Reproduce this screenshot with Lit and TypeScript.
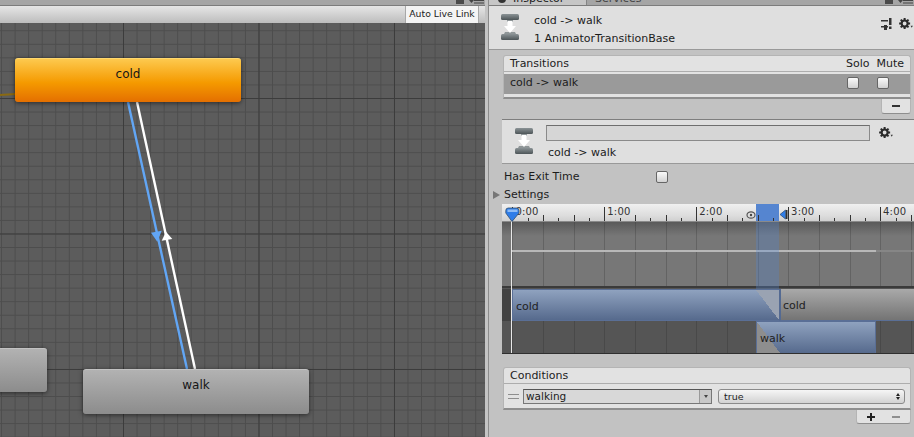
import { LitElement, html, css, svg } from "lit";
import { customElement } from "lit/decorators.js";

const range = (n: number) => Array.from({ length: n }, (_, i) => i);

const gear = () => html`
	<svg class="gear" width="14" height="11" viewBox="-6 -6 15 12" aria-hidden="true">
		${range(8).map(
			(i) => svg`<rect x="-1.100" y="-6" width="2.200" height="3" fill="#2b2b2b" transform="rotate(${i * 45})" />`
		)}
		<circle r="3.300" fill="none" stroke="#2b2b2b" stroke-width="2.400" />
		<path d="M6.500 2.500h2.500L7.750 4.500z" fill="#333" />
	</svg>
`;

const transitionIcon = () => html`
	<svg class="ticon" width="18" height="26" viewBox="0 0 18 26" aria-hidden="true">
		<defs>
			<linearGradient id="bar" x1="0" y1="0" x2="0" y2="1">
				<stop offset="0" stop-color="#8b9396" />
				<stop offset="1" stop-color="#4d5558" />
			</linearGradient>
		</defs>
		<rect x="0" y="0" width="18" height="6" rx="1.500" fill="url(#bar)" />
		<rect x="0" y="20" width="18" height="6" rx="1.500" fill="url(#bar)" />
		<path fill="#8f9698" d="M6 6h6v2H6zM4 18h10l1 2H3z" />
		<path fill="#fff" d="M6.500 7h5v5H15l-6 7-6-7h3.500z" />
	</svg>
`;

const stripIcons = () => html`
	<div class="strip-icons">
		<div class="strip-square"></div>
		<svg width="15" height="5" viewBox="0 0 15 5" aria-hidden="true">
			<path fill="#444" d="M0 0h5L2.500 3zM5 0h10v1H5zM5 2.500h10v1H5z" />
		</svg>
	</div>
`;

@customElement("app-root")
export class AppRoot extends LitElement {
	static styles = css`
		:host {
			display: block;
			width: 914px;
			height: 437px;
			overflow: hidden;
			font-family: "DejaVu Sans", sans-serif;
			font-size: 11px;
			color: #1c1c1c;
			background: #a5a5a5;
		}
		* {
			box-sizing: border-box;
		}
		svg {
			flex: none;
		}
		.root {
			display: flex;
			height: 437px;
		}
		.left {
			width: 485px;
			display: flex;
			flex-direction: column;
		}
		.divider {
			width: 4px;
			background: linear-gradient(90deg, #c4c4c4 0 3px, #8c8c8c 3px);
		}
		.right {
			flex: 1;
			min-width: 0;
			display: flex;
			flex-direction: column;
			background: #c2c2c2;
		}
		.tabstrip {
			height: 6px;
			flex: none;
			background: #a5a5a5;
			border-bottom: 1px solid #7c7c7c;
			display: flex;
			align-items: flex-end;
			overflow: hidden;
			position: relative;
		}
		.tab {
			flex: none;
			height: 18px;
			padding: 5px 0 0 24px;
			line-height: 14px;
			white-space: nowrap;
			overflow: hidden;
			position: relative;
		}
		.tab.on {
			width: 98px;
			background: #c6c6c6;
			border-right: 1px solid #858585;
		}
		.tab.on::before {
			content: "";
			position: absolute;
			left: 9px;
			top: 8px;
			width: 8px;
			height: 8px;
			border-radius: 50%;
			background: #333;
		}
		.tab.off {
			width: 70px;
			padding-left: 8px;
			color: #444;
		}
		.strip-icons {
			position: absolute;
			right: 1px;
			top: 0;
			display: flex;
			gap: 5px;
		}
		.strip-square {
			width: 8px;
			height: 4px;
			background: #4a4a4a;
		}
		.toolbar {
			height: 17px;
			flex: none;
			display: flex;
			justify-content: flex-end;
			padding-right: 6px;
			background: linear-gradient(#e6e6e6, #bdbdbd);
		}
		.live-btn {
			width: 74px;
			height: 17px;
			font-size: 9.300px;
			line-height: 16px;
			text-align: center;
			white-space: nowrap;
			color: #222;
			background: #f4f4f4;
			border-left: 1px solid #a8a8a8;
			border-right: 1px solid #a8a8a8;
		}
		.graph {
			flex: 1;
			position: relative;
			overflow: hidden;
			background-color: #5c5c5c;
			background-image: linear-gradient(90deg, #3c3c3c 1px, transparent 1px),
				linear-gradient(#3c3c3c 1px, transparent 1px),
				linear-gradient(90deg, #4d4d4d 1px, transparent 1px),
				linear-gradient(#4d4d4d 1px, transparent 1px);
			background-size: 135.500px 135.500px, 135.500px 135.500px, 13.550px 13.550px, 13.550px 13.550px;
			background-position: 123px 75px, 123px 75px, 123px 75px, 123px 75px;
		}
		.edges {
			position: absolute;
			left: 0;
			top: 0;
		}
		.node {
			position: absolute;
			width: 226px;
			height: 44px;
			border-radius: 3px;
			text-align: center;
			font-size: 12px;
			line-height: 31px;
			color: #161616;
			box-shadow: 0 1px 5px rgba(0, 0, 0, 0.55);
			background: linear-gradient(#b2b2b2, #8c8c8c);
			border-top: 1px solid #c2c2c2;
		}
		.node.cold {
			left: 15px;
			top: 35px;
			background: linear-gradient(#fdc94e, #f59a00 55%, #e46f00);
			border-top-color: #ffd86e;
		}
		.node.walk {
			left: 83px;
			top: 346px;
			height: 45px;
		}
		.node.other {
			left: -179px;
			top: 325px;
		}

		.head {
			height: 44px;
			flex: none;
			display: flex;
			gap: 15px;
			padding: 8px 1px 0 12px;
			background: #dfdfdf;
			border-bottom: 1px solid #999;
		}
		.head-text {
			flex: 1;
			display: flex;
			flex-direction: column;
			gap: 4px;
			line-height: 14px;
		}
		.head-tools {
			display: flex;
			gap: 7px;
			padding-top: 4px;
		}
		.list {
			flex: none;
			margin: 5px 3px 0 14px;
			background: #e2e2e2;
			border-radius: 3px 3px 0 0;
			border: 1px solid #b4b4b4;
			border-bottom-color: #8e8e8e;
			border-bottom-width: 2px;
		}
		.list-head {
			height: 16px;
			line-height: 15px;
			padding: 0 6px;
			display: flex;
			justify-content: space-between;
			border-bottom: 1px solid #adadad;
		}
		.list-cols {
			display: flex;
			gap: 7px;
		}
		.row-sel {
			height: 20px;
			margin-top: 2px;
			background: #9a9a9a;
			display: flex;
			align-items: center;
			justify-content: space-between;
			padding: 0 21px 3px 6px;
		}
		.row-checks {
			display: flex;
			gap: 18px;
		}
		.check {
			display: block;
			width: 12px;
			height: 12px;
			border-radius: 2px;
			background: linear-gradient(#fafafa, #d2d2d2);
			border: 1px solid #666;
		}
		.list-foot {
			height: 3px;
		}
		.foot-wrap {
			display: flex;
			justify-content: flex-end;
			flex: none;
			margin-right: 3px;
		}
		.foot {
			height: 15px;
			background: #e2e2e2;
			border: 1px solid #b4b4b4;
			border-top: none;
			border-bottom: 1px solid #8e8e8e;
			border-radius: 0 0 3px 3px;
			display: flex;
			align-items: center;
			justify-content: flex-end;
			gap: 17px;
			padding: 0 10px;
		}
		.foot.single {
			width: 30px;
		}
		.foot.double {
			width: 55px;
			height: 14px;
		}
		.pm {
			position: relative;
			width: 8px;
			height: 2px;
			background: #8e8e8e;
		}
		.pm.dark {
			background: #333;
		}
		.pm.plus {
			background: #222;
		}
		.pm.plus::after {
			content: "";
			position: absolute;
			left: 3px;
			top: -3px;
			width: 2px;
			height: 8px;
			background: #222;
		}
		.state {
			flex: none;
			height: 45px;
			margin: 5px 0 0 13px;
			background: #dfdfdf;
			border-top: 1px solid #7e7e7e;
			border-bottom: 1px solid #999;
			display: flex;
			padding: 5px 0 0 13px;
		}
		.state .ticon {
			margin-top: 3px;
		}
		.state .gear {
			margin-top: 2px;
		}
		.state-body {
			width: 324px;
			flex: none;
			margin: 0 9px 0 13px;
		}
		.state-input {
			height: 16px;
			background: #d6d6d6;
			border: 1px solid #8a8a8a;
			border-top-color: #6e6e6e;
			margin-bottom: 5px;
		}
		.state-label {
			padding-left: 2px;
			line-height: 14px;
		}
		.prop {
			flex: none;
			height: 18px;
			padding-left: 15px;
			display: flex;
			align-items: center;
			line-height: 14px;
		}
		.prop.exit {
			margin-top: 4px;
		}
		.prop-name {
			width: 152px;
		}
		.settings {
			padding-left: 4px;
			gap: 4px;
		}
		.tri {
			width: 0;
			height: 0;
			border-left: 7px solid #777;
			border-top: 4.500px solid transparent;
			border-bottom: 4.500px solid transparent;
		}
		.timeline {
			flex: none;
			position: relative;
			height: 150px;
			margin-left: 13px;
			overflow: hidden;
			background: #555;
			border-bottom: 1px solid #2f2f2f;
		}
		.ruler {
			position: absolute;
			inset: 0 0 auto 0;
			height: 18px;
			background: linear-gradient(#f0f0f0, #dcdcdc 70%, #d0d0d0);
			border-bottom: 1px solid #8a8a8a;
		}
		.tick {
			position: absolute;
			bottom: 0;
			width: 1px;
			background: #333;
		}
		.time {
			position: absolute;
			top: 1px;
			font-size: 10px;
			letter-spacing: 0.2px;
			line-height: 13px;
			color: #333;
		}
		.upper {
			position: absolute;
			inset: 18px 0 auto 0;
			height: 66px;
			background: linear-gradient(#5a5a5a, #777 14px);
			border-bottom: 2px solid #3a3a3a;
		}
		.vline {
			position: absolute;
			width: 1px;
			background: rgba(40, 40, 40, 0.25);
		}
		.curve {
			position: absolute;
			left: 9px;
			top: 28px;
			width: 365px;
			height: 2px;
			background: #b8b8b8;
		}
		.curve-rest {
			position: absolute;
			left: 374px;
			top: 28px;
			right: 0;
			height: 2px;
			background: #868686;
		}
		.clip {
			position: absolute;
			height: 32px;
			line-height: 34px;
			padding-left: 3px;
			color: #222;
			overflow: hidden;
		}
		.clip.from {
			left: 10px;
			top: 85px;
			width: 268px;
			background: linear-gradient(to top right, transparent 50%, #9aa3b2 50%) right / 23px 100% no-repeat,
				linear-gradient(#8fa2bf, #566a8d);
			border: 1px solid #5a6f96;
		}
		.clip.next {
			left: 277px;
			top: 85px;
			right: 0;
			background: linear-gradient(#a9a9a9, #747474);
			border-left: 2px solid #546a92;
			border-bottom: 1px solid #5a6f96;
			padding-left: 2px;
		}
		.clip.to {
			left: 254px;
			top: 117px;
			width: 120px;
			height: 33px;
			background: linear-gradient(to top right, #8e8e8e 50%, transparent 50%) left / 23px 100% no-repeat,
				linear-gradient(#8fa2bf, #566a8d);
			border: 1px solid #5a6f96;
		}
		.clip-left {
			position: absolute;
			left: 0;
			top: 85px;
			width: 10px;
			height: 32px;
			background: #424242;
		}
		.sel-top {
			position: absolute;
			left: 254px;
			top: 0;
			width: 23px;
			height: 17px;
			background: #5585d0;
		}
		.sel-band {
			position: absolute;
			left: 254px;
			top: 18px;
			width: 23px;
			height: 67px;
			background: rgba(85, 133, 208, 0.32);
		}
		.playline {
			position: absolute;
			left: 9px;
			top: 17px;
			bottom: 0;
			width: 1px;
			background: #e8e8e8;
		}
		.over {
			position: absolute;
			left: 0;
			top: 0;
		}

		.cond {
			margin: 13px 3px 0 14px;
		}
		.cond-row {
			height: 24px;
			display: flex;
			align-items: center;
			padding: 0 5px 0 4px;
			gap: 4px;
		}
		.grip {
			width: 11px;
			height: 5px;
			flex: none;
			border-top: 1px solid #8e8e8e;
			border-bottom: 1px solid #8e8e8e;
		}
		.combo {
			width: 189px;
			height: 15px;
			flex: none;
			display: flex;
			align-items: center;
			background: #d8d8d8;
			border: 1px solid #777;
			border-top-color: #555;
			font-size: 10.500px;
			padding-left: 2px;
			position: relative;
		}
		.combo-arrow {
			position: absolute;
			right: 0;
			top: 0;
			bottom: 0;
			width: 12px;
			border-left: 1px solid #999;
			background: #c8c8c8;
			display: flex;
			align-items: center;
			justify-content: center;
		}
		.combo-arrow::after {
			content: "";
			border-top: 3px solid #444;
			border-left: 2px solid transparent;
			border-right: 2px solid transparent;
		}
		.select {
			flex: 1;
			height: 15px;
			margin-left: 2px;
			border-radius: 3px;
			border: 1px solid #8a8a8a;
			background: linear-gradient(#f6f6f6, #d2d2d2);
			padding: 0 4px 0 5px;
			font-size: 9.500px;
			line-height: 13px;
			display: flex;
			justify-content: space-between;
			align-items: center;
		}
		.updown {
			display: flex;
			flex-direction: column;
			gap: 1px;
		}
		.updown i {
			display: block;
			border-left: 2px solid transparent;
			border-right: 2px solid transparent;
		}
		.updown i:first-child {
			border-bottom: 3px solid #222;
		}
		.updown i:last-child {
			border-top: 3px solid #222;
		}
	`;

	renderRuler() {
		const x0 = 10.4;
		const step = 15.33;
		return html`
			<div class="ruler">
				<div class="sel-top"></div>
				${range(27).map((i) => {
					const h = i % 6 === 0 ? 14 : i % 2 === 0 ? 6 : 3;
					return html`<div class="tick" style="left:${x0 + i * step}px;height:${h}px"></div>`;
				})}
				${range(5).map(
					(i) => html`<div class="time" style="left:${x0 + 3 + i * 91.9}px">${i}:00</div>`
				)}
			</div>
		`;
	}

	renderVlines(top: number, height: number) {
		return range(14).map(
			(i) =>
				html`<div class="vline" style="left:${10.4 + i * 30.66}px;top:${top}px;height:${height}px"></div>`
		);
	}

	renderMarkers() {
		return html`
			<svg class="over" width="412" height="30" aria-hidden="true">
				${svg`
					<path d="M3.800 6.500 Q3.800 4 6.300 4 H14.500 Q17 4 17 6.500 V9 L10 17.500 L3.800 9z" fill="#2f7de8" stroke="#33506f" stroke-width="0.8" />
					<path d="M5.500 5.500h10v2.500h-10z" fill="#8ebcf5" />
					<ellipse cx="249" cy="11" rx="4" ry="3.200" fill="none" stroke="#555" stroke-width="1.200" />
					<circle cx="249" cy="11" r="1.200" fill="#444" />
					<path d="M278 10.500 L283.500 6 V15z" fill="#2f7de8" stroke="#26466b" stroke-width="0.7" />
					<rect x="284" y="6" width="1.500" height="9" fill="#333" />
				`}
			</svg>
		`;
	}

	render() {
		return html`
			<div class="root">
				<div class="left">
					<div class="tabstrip">${stripIcons()}</div>
					<div class="toolbar"><div class="live-btn">Auto Live Link</div></div>
					<div class="graph">
						<svg class="edges" width="485" height="414" aria-hidden="true">
							${svg`
								<line x1="0" y1="72" x2="16" y2="71" stroke="#8a6a12" stroke-width="2" />
								<line x1="128" y1="79" x2="187" y2="346" stroke="#62a6f5" stroke-width="2.400" />
								<line x1="137" y1="79" x2="195" y2="346" stroke="#ffffff" stroke-width="2.400" />
								<polygon points="151,209.700 161.700,207.700 157.300,218.700" fill="#62a6f5" />
								<polygon points="166,208.700 161.700,217.700 172.300,216" fill="#ffffff" />
							`}
						</svg>
						<div class="node other"></div>
						<div class="node cold">cold</div>
						<div class="node walk">walk</div>
					</div>
				</div>
				<div class="divider"></div>
				<div class="right">
					<div class="tabstrip">
						<div class="tab on">Inspector</div>
						<div class="tab off">Services</div>
						${stripIcons()}
					</div>
					<div class="head">
						${transitionIcon()}
						<div class="head-text">
							<span>cold -&gt; walk</span>
							<span>1 AnimatorTransitionBase</span>
						</div>
						<div class="head-tools">
							<svg width="11" height="12" viewBox="0 0 11 12" aria-hidden="true">
								<path fill="#333" d="M0 2h7v1.500H0zM0 8h7v1.500H0zM3 7h3v5H3zM8 0h2.500v7H8zM8 8.500h2.500V11H8z" />
							</svg>
							${gear()}
						</div>
					</div>
					<div class="list">
						<div class="list-head">
							<span>Transitions</span>
							<div class="list-cols"><span>Solo</span><span>Mute</span></div>
						</div>
						<div class="row-sel">
							<span>cold -&gt; walk</span>
							<div class="row-checks"><span class="check"></span><span class="check"></span></div>
						</div>
						<div class="list-foot"></div>
					</div>
					<div class="foot-wrap">
						<div class="foot single"><div class="pm dark"></div></div>
					</div>
					<div class="state">
						${transitionIcon()}
						<div class="state-body">
							<div class="state-input"></div>
							<div class="state-label">cold -&gt; walk</div>
						</div>
						${gear()}
					</div>
					<div class="prop exit">
						<span class="prop-name">Has Exit Time</span><span class="check"></span>
					</div>
					<div class="prop settings"><span class="tri"></span><span>Settings</span></div>
					<div class="timeline">
						<div class="upper">
							${this.renderVlines(0, 64)}
							<div class="curve"></div>
							<div class="curve-rest"></div>
						</div>
						${this.renderVlines(117, 33)}
						<div class="clip-left"></div>
						<div class="clip from">cold</div>
						<div class="clip next">cold</div>
						<div class="clip to">walk</div>
						<div class="sel-band"></div>
						${this.renderRuler()}
						<div class="playline"></div>
						${this.renderMarkers()}
					</div>
					<div class="list cond">
						<div class="list-head"><span>Conditions</span></div>
						<div class="cond-row">
							<div class="grip"></div>
							<div class="combo">walking<span class="combo-arrow"></span></div>
							<div class="select">
								<span>true</span>
								<span class="updown"><i></i><i></i></span>
							</div>
						</div>
					</div>
					<div class="foot-wrap">
						<div class="foot double">
							<div class="pm plus"></div>
							<div class="pm"></div>
						</div>
					</div>
				</div>
			</div>
		`;
	}
}
